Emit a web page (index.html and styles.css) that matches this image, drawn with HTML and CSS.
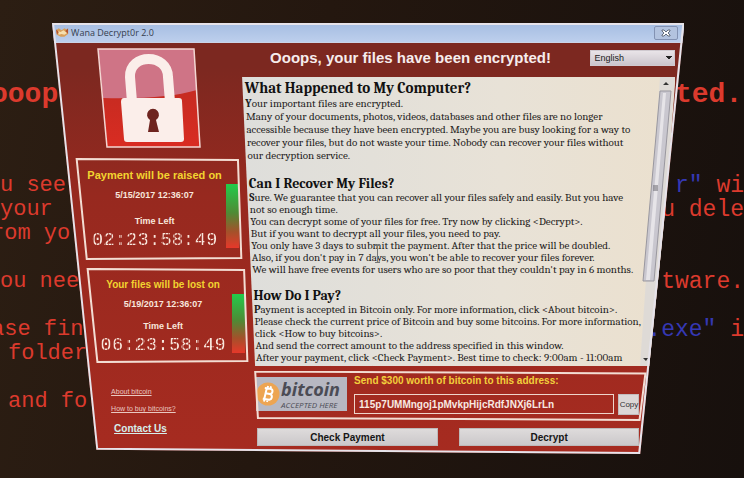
FILE: index.html
```
<!DOCTYPE html>
<html lang="en">
<head>
    <meta charset="UTF-8">
    <meta name="viewport" content="width=device-width, initial-scale=1.0">
    <title>Wana Decrypt0r 2.0</title>
    <link rel="stylesheet" href="styles.css">
</head>
<body>
    <!-- Wallpaper text behind the window -->
    <div class="wallpaper">
        <div class="row heading"><span class="left cut">ooop</span><span class="right">ted.</span></div>
        <div class="row"><span class="left">u see</span><span class="right"> <b>r"</b> wi</span></div>
        <div class="row"><span class="left">your</span><span class="right">ou dele</span></div>
        <div class="row gap"><span class="left cut">rom yo</span></div>
        <div class="row gap"><span class="left">ou nee</span><span class="right">tware.</span></div>
        <div class="row"><span class="left cut">ase fin</span><span class="right"><b>.exe"</b> i</span></div>
        <div class="row gap"><span class="left in">folder</span></div>
        <div class="row"><span class="left in">and fo</span></div>
    </div>

    <div class="window">
        <div class="titlebar">
            <svg class="title-icon" viewBox="0 0 14 11">
                <path d="M0 3l3-2 3 2 3-2 4 2v4l-4 3H5L1 8z" fill="#d9a05a"/>
                <path d="M2 4l3 1 3-2 4 3-3 2-3-1-3 1z" fill="#f6dfae"/>
                <path d="M0 2l3 3-2 3zM13 1l-3 3 3 3z" fill="#b5562f"/>
            </svg>
            <span class="title">Wana Decrypt0r 2.0</span>
            <button class="close" aria-label="Close">
                <svg viewBox="0 0 10 8"><path d="M1 1h2l2 2 2-2h2v1L7 4l2 2v1H7L5 5 3 7H1V6l2-2-2-2z" fill="#fff" stroke="#46505f" stroke-width=".8"/></svg>
            </button>
        </div>

        <div class="content">
            <div class="sidebar">
                <svg class="lock" viewBox="0 0 104 100">
                    <defs>
                        <linearGradient id="lockRed" x1="0" y1="0" x2="0" y2="1">
                            <stop offset="0" stop-color="#b82a20"/>
                            <stop offset="1" stop-color="#d92c22"/>
                        </linearGradient>
                    </defs>
                    <path d="M1 1h96l6 98H10z" fill="url(#lockRed)"/>
                    <path d="M1 1h96l3 41C80 48 50 51 6 50z" fill="#cf7486"/>
                    <path d="M1 1h96l6 98H10z" fill="none" stroke="#f3d6d2" stroke-width="1.5"/>
                    <path d="M35 54L33 29C32 5 71 5 71 29l2 25" fill="none" stroke="#fbeeea" stroke-width="10"/>
                    <path d="M27 50h55q3 0 3 3l2 38q0 3-3 3H30q-3 0-3-3l-3-37q0-4 3-4z" fill="#fbeeea"/>
                    <path d="M51 84l2-12a6 6 0 1 1 6 0l3 12z" fill="#6e241f"/>
                </svg>

                <div class="card">
                    <svg class="frame" viewBox="0 0 100 100" preserveAspectRatio="none"><path d="M1 1L97 2L99 98L7 99Z"/></svg>
                    <div class="card-text">
                        <h3>Payment will be raised on</h3>
                        <p class="date">5/15/2017 12:36:07</p>
                        <p class="label">Time Left</p>
                        <p class="timer">02:23:58:49</p>
                    </div>
                    <div class="bar"></div>
                </div>

                <div class="card second">
                    <svg class="frame" viewBox="0 0 100 100" preserveAspectRatio="none"><path d="M1 1L97 2L99 98L7 99Z"/></svg>
                    <div class="card-text">
                        <h3>Your files will be lost on</h3>
                        <p class="date">5/19/2017 12:36:07</p>
                        <p class="label">Time Left</p>
                        <p class="timer">06:23:58:49</p>
                    </div>
                    <div class="bar"></div>
                </div>

                <div class="links">
                    <a href="#">About bitcoin</a>
                    <a href="#">How to buy bitcoins?</a>
                    <a href="#" class="contact">Contact Us</a>
                </div>
            </div>

            <div class="main">
                <div class="top">
                    <h1>Ooops, your files have been encrypted!</h1>
                    <select class="language" aria-label="Language">
                        <option>English</option>
                    </select>
                </div>

                <div class="paper">
                    <div class="paper-text">
                        <div class="slant"></div>
                        <h2>What Happened to My Computer?</h2>
                        <p><b>Y</b>our important files are encrypted.<br>
                        Many of your documents, photos, videos, databases and other files are no longer<br>
                        accessible because they have been encrypted. Maybe you are busy looking for a way to<br>
                        recover your files, but do not waste your time. Nobody can recover your files without<br>
                        our decryption service.</p>
                        <h2 class="small">Can I Recover My Files?</h2>
                        <p class="tight"><b>S</b>ure. We guarantee that you can recover all your files safely and easily. But you have<br>
                        not so enough time.<br>
                        You can decrypt some of your files for free. Try now by clicking &lt;Decrypt&gt;.<br>
                        But if you want to decrypt all your files, you need to pay.<br>
                        You only have 3 days to submit the payment. After that the price will be doubled.<br>
                        Also, if you don't pay in 7 days, you won't be able to recover your files forever.<br>
                        We will have free events for users who are so poor that they couldn't pay in 6 months.</p>
                        <h2 class="small">How Do I Pay?</h2>
                        <p class="tight"><b>P</b>ayment is accepted in Bitcoin only. For more information, click &lt;About bitcoin&gt;.<br>
                        Please check the current price of Bitcoin and buy some bitcoins. For more information,<br>
                        click &lt;How to buy bitcoins&gt;.<br>
                        And send the correct amount to the address specified in this window.<br>
                        After your payment, click &lt;Check Payment&gt;. Best time to check: 9:00am - 11:00am<br>
                        GMT from Monday to Friday.</p>
                    </div>
                    <svg class="scrollbar" viewBox="0 0 36 289" preserveAspectRatio="none">
                        <path d="M21 0h15L14 289H1z" fill="#dedad6"/>
                        <path d="M21 14h11L15 204H4z" fill="#c9c7cf" stroke="#99979f"/>
                        <path d="M24 16h3L11 203H7z" fill="#e6e4e8"/>
                        <path d="M24 8l3-3 3 3zM4 281h5l-2 3z" fill="#333"/>
                        <path d="M14 109h5M14 111h5M14 113h5" stroke="#66646c" fill="none"/>
                    </svg>
                    <svg class="cursor" viewBox="0 0 5 18"><path d="M0 .5h5M2.500 0v18M0 17.500h5" stroke="#777" fill="none"/></svg>
                </div>

                <div class="payment">
                    <svg class="frame" viewBox="0 0 100 100" preserveAspectRatio="none"><path d="M.3 1L99.500 5L98 98L1 94Z"/></svg>
                    <div class="bitcoin">
                        <svg class="coin" viewBox="0 0 24 24">
                            <circle cx="12" cy="12" r="11.500" fill="#eda552"/>
                            <path d="M8 6.500h5.500a2.600 2.600 0 0 1 0 5.200H9.500h4.500a3 3 0 0 1 0 5.800H7.500M10 6.500l-1 11M11 4l-.4 2.500M14 4l-.4 2.500M9.500 17.500L9 20M12.500 17.500L12 20" fill="none" stroke="#fff" stroke-width="2" transform="rotate(8 12 12)"/>
                        </svg>
                        <div class="bitcoin-text"><strong>bitcoin</strong><em>ACCEPTED HERE</em></div>
                    </div>
                    <div class="send">
                        <label for="address">Send $300 worth of bitcoin to this address:</label>
                        <div class="send-row">
                            <input type="text" id="address" value="115p7UMMngoj1pMvkpHijcRdfJNXj6LrLn" readonly>
                            <button class="copy">Copy</button>
                        </div>
                    </div>
                </div>

                <div class="actions">
                    <button>Check Payment</button>
                    <button>Decrypt</button>
                </div>
            </div>
        </div>
        <svg class="frame edge" viewBox="0 0 100 100" preserveAspectRatio="none"><path d="M0 0L100 0L93 100L7 99Z"/></svg>
    </div>
</body>
</html>
```

FILE: styles.css
```
* {
    box-sizing: border-box;
}
body {
    margin: 0;
    min-height: 100vh;
    position: relative;
    overflow: hidden;
    font-family: "Liberation Sans", Arial, sans-serif;
    background: linear-gradient(100deg, #2c1e13 0%, #24170f 40%, #17100d 100%);
}
h1, h2, h3, p {
    margin: 0;
}
button {
    font-family: inherit;
    padding: 0;
    cursor: pointer;
}

/* Wallpaper */
.wallpaper {
    padding-top: 79px;
    font-family: "Liberation Mono", "Courier New", monospace;
    color: #dc3a2d;
}
.row {
    display: flex;
    justify-content: space-between;
    font-size: 22px;
    line-height: 24px;
    white-space: pre;
}
.row.gap {
    margin-bottom: 24px;
}
.row.heading {
    font-size: 28px;
    font-weight: bold;
    line-height: 32px;
    margin-bottom: 63px;
}
.left.cut {
    margin-left: -9px;
}
.left.in {
    margin-left: 8px;
}
.right {
    flex: 0 0 82px;
    font-size: 23px;
}
.right b {
    font-weight: normal;
    color: #3538b4;
}
.heading .right {
    flex-basis: 69px;
    font-size: 28px;
}

/* Window */
.window {
    position: absolute;
    top: 23px;
    left: 7%;
    width: 85%;
    background: linear-gradient(to bottom, #7c2820 10%, #97291f 40%, #a62b20 100%);
    clip-path: polygon(0 0, 100% 0, 93% 100%, 7% 99%);
}
.frame {
    position: absolute;
    top: 0;
    left: 0;
    width: 100%;
    height: 100%;
    fill: none;
    stroke: #f3ddd3;
    stroke-width: 2px;
    pointer-events: none;
}
.frame path {
    vector-effect: non-scaling-stroke;
}
.frame.edge {
    stroke: #e6e3ea;
    stroke-width: 4px;
}
.titlebar {
    display: flex;
    align-items: center;
    height: 20px;
    padding: 0 6px 0 4px;
    background: linear-gradient(to bottom, #a5bde2, #bdcfec);
    border-bottom: 1px solid #cbd3e6;
}
.title-icon {
    width: 13px;
    height: 11px;
}
.title {
    margin-left: 2px;
    font-family: "Open Sans", sans-serif;
    font-size: 9px;
    color: #36404e;
}
.close {
    margin-left: auto;
    width: 24px;
    height: 14px;
    background: #b3c3df;
    border: 1px solid #8392b3;
    border-radius: 2px;
    line-height: 0;
}
.close svg {
    width: 10px;
    height: 8px;
}
.content {
    display: flex;
}

/* Sidebar */
.sidebar {
    flex: 0 0 190px;
    min-width: 0;
    padding-top: 5px;
}
.lock {
    display: block;
    width: 104px;
    height: 100px;
    margin-left: 45px;
}
.card {
    position: relative;
    display: flex;
    gap: 2px;
    width: 168px;
    margin: 10px 0 0 23px;
    padding: 10px 4px 10px 10px;
    text-align: center;
    font-weight: bold;
    color: #f8e6dc;
}
.card.second {
    width: 163px;
    margin: 8px 0 0 34px;
    padding: 10px 4px 8px 10px;
}
.card-text {
    flex: 1;
}
.card h3 {
    font-size: 11px;
    line-height: 14px;
    white-space: nowrap;
    color: #f2d430;
}
.card.second h3 {
    font-size: 10px;
}
.date, .label {
    font-size: 9px;
    line-height: 12px;
}
.date {
    margin-top: 7px;
}
.label {
    margin-top: 14px;
}
.second .date {
    margin-top: 6px;
}
.second .label {
    margin-top: 10px;
}
/* dotted counter digits */
.timer {
    margin-top: 3px;
    font-family: "Liberation Mono", monospace;
    font-size: 19px;
    font-weight: normal;
    line-height: 20px;
    -webkit-mask-image: repeating-linear-gradient(to right, #000 0 2px, rgba(0, 0, 0, 0.4) 2px 3px);
    mask-image: repeating-linear-gradient(to right, #000 0 2px, rgba(0, 0, 0, 0.4) 2px 3px);
}
.bar {
    width: 13px;
    margin: 16px 0 2px;
    background: linear-gradient(to bottom, #22cc4a, #4f8a35 45%, #a5502a 75%, #e6382a);
}
.links {
    display: flex;
    flex-direction: column;
    align-items: flex-start;
    gap: 7px;
    padding: 24px 0 0 59px;
}
.links a {
    font-size: 7px;
    line-height: 10px;
    color: #e9c8c0;
}
.links .contact {
    margin: 2px 0 0 3px;
    font-size: 10px;
    font-weight: bold;
    line-height: 12px;
    color: #d5efec;
}

/* Main column */
.main {
    flex: 1;
    min-width: 0;
    padding: 0 9px 8px 0;
}
.top {
    display: flex;
    align-items: center;
    justify-content: space-between;
    height: 34px;
    padding: 0 0 4px 28px;
}
h1 {
    font-size: 15px;
    line-height: 20px;
    white-space: nowrap;
    color: #f6ecec;
}
.language {
    width: 85px;
    height: 16px;
    padding: 0 3px;
    appearance: none;
    border: 1px solid #cfc9cf;
    border-radius: 0;
    font-family: inherit;
    font-size: 9px;
    color: #222;
    background: linear-gradient(to bottom left, #222 50%, transparent 50%) 75px 5px / 3px 4px no-repeat,
        linear-gradient(to bottom right, #222 50%, transparent 50%) 78px 5px / 3px 4px no-repeat,
        linear-gradient(to bottom, #e9e4e8, #cbc5cc);
}
.paper {
    position: relative;
    display: flex;
    height: 289px;
    background: linear-gradient(to right, #dededb, #e8e2d7 60%, #ebe0ce);
    clip-path: polygon(0 0, 100% 0, 95% 100%, 3% 100%);
    color: #1f1d1c;
}
.paper-text {
    flex: 1;
    min-width: 0;
    height: 289px;
    padding: 3px 0 0 2px;
    font-family: Cambria, "Liberation Serif", serif;
    white-space: nowrap;
}
.slant {
    float: left;
    width: 12px;
    height: 286px;
    shape-outside: polygon(0 0, 0 100%, 100% 100%);
}
.paper h2 {
    font-size: 15px;
    line-height: 17px;
    color: #111;
}
.paper h2.small {
    font-size: 14px;
}
.paper p {
    font-size: 11px;
    line-height: 13px;
    margin-bottom: 13px;
}
.paper p.tight {
    line-height: 12px;
    margin-bottom: 11px;
}
.scrollbar {
    flex: 0 0 36px;
    height: 100%;
}
.cursor {
    position: absolute;
    top: 168px;
    left: 133px;
    width: 5px;
    height: 18px;
}

/* Payment box */
.payment {
    position: relative;
    display: flex;
    gap: 7px;
    height: 50px;
    margin: 5px 28px 0 12px;
    padding: 4px 8px 0 2px;
}
.bitcoin {
    display: flex;
    align-items: center;
    gap: 1px;
    width: 91px;
    height: 34px;
    margin-top: 2px;
    background: #b7b8c2;
    color: #4b4c55;
}
.coin {
    flex: 0 0 24px;
    height: 24px;
}
.bitcoin-text {
    display: flex;
    flex-direction: column;
    font-family: "Open Sans", sans-serif;
    white-space: nowrap;
}
.bitcoin-text strong {
    font-size: 18px;
    font-style: italic;
    line-height: 20px;
}
.bitcoin-text em {
    font-size: 8px;
    line-height: 11px;
}
.send {
    flex: 1;
}
.send label {
    display: block;
    font-size: 10px;
    font-weight: bold;
    line-height: 12px;
    color: #f2cf3c;
}
.send-row {
    display: flex;
    gap: 4px;
    margin-top: 7px;
}
.send input {
    flex: 1;
    min-width: 0;
    height: 20px;
    padding: 0 4px;
    border: 1px solid #efd5cb;
    background: transparent;
    font-family: inherit;
    font-size: 10px;
    font-weight: bold;
    color: #f8e9e2;
}
.copy {
    width: 21px;
    height: 21px;
    border: 1px solid #c2bcbd;
    background: #dcd7d6;
    font-size: 8px;
    color: #333;
}
.actions {
    display: flex;
    gap: 21px;
    margin: 7px 36px 0 15px;
}
.actions button {
    flex: 1;
    height: 18px;
    border: 1px solid #bdb9b9;
    background: linear-gradient(to bottom, #dedbdb, #cbc8ca);
    font-size: 10px;
    font-weight: bold;
    color: #161616;
}
```
